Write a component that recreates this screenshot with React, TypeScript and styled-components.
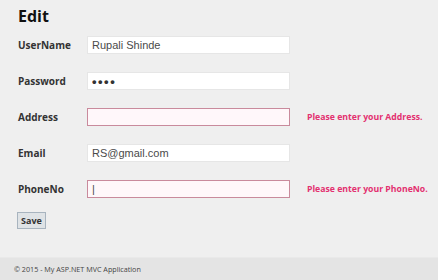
import React from "react";
import styled, { createGlobalStyle } from "styled-components";

const Global = createGlobalStyle`
  html, body { margin: 0; padding: 0; background: #efefef; }
  body { font-family: "Open Sans", "Liberation Sans", sans-serif; }
  #root { width: 438px; height: 280px; overflow: hidden; }
`;

const Page = styled.div`
  width: 438px;
  height: 280px;
  display: flex;
  flex-direction: column;
  background: #efefef;
`;

const Main = styled.main`
  flex: 1;
  padding: 6px 0 0 18px;
`;

const Title = styled.h2`
  margin: 0 0 10px 0;
  font-size: 16px;
  font-weight: 700;
  color: #111;
  line-height: 20px;
`;

const Form = styled.form`
  display: flex;
  flex-direction: column;
  gap: 18px;
`;

const Row = styled.div`
  display: grid;
  grid-template-columns: 69px 203px auto;
  column-gap: 0;
  align-items: center;
  height: 18px;
`;

const Label = styled.label`
  font-size: 10px;
  font-weight: 700;
  color: #333;
`;

const Input = styled.input<{ $error?: boolean; $secret?: boolean }>`
  box-sizing: border-box;
  width: 203px;
  height: 18px;
  padding: 0 0 0 4px;
  border: 1px solid ${(p) => (p.$error ? "#c98a9c" : "#e6e6e6")};
  background: ${(p) => (p.$error ? "#fff7fa" : "#ffffff")};
  font-family: "Liberation Sans", Arial, sans-serif;
  font-size: ${(p) => (p.$secret ? "13px" : "11px")};
  letter-spacing: ${(p) => (p.$secret ? "1.5px" : "0")};
  font-weight: ${(p) => (p.$secret ? 700 : 400)};
  color: ${(p) => (p.$secret ? "#333" : "#4a4a4a")};
  outline: none;
`;

const Error = styled.span`
  margin-left: 17px;
  font-size: 8.7px;
  font-weight: 700;
  color: #e3316f;
  white-space: nowrap;
`;

const SaveButton = styled.button`
  align-self: flex-start;
  margin: -4px 0 0 -1px;
  box-sizing: border-box;
  height: 17px;
  padding: 0 3px;
  border: 1px solid #a8b4bf;
  background: #dfe3e6;
  font-family: "Open Sans", sans-serif;
  font-size: 9px;
  font-weight: 700;
  color: #333;
`;

const Footer = styled.footer`
  height: 22px;
  background: #e4e4e4;
  border-top: 1px solid #e9e9e9;
  display: flex;
  align-items: center;
  padding-left: 14px;
  font-family: "Open Sans", sans-serif;
  font-size: 7.2px;
  color: #444;
`;

const fields = [
  { label: "UserName", value: "Rupali Shinde" },
  { label: "Password", value: "••••", secret: true },
  { label: "Address", value: "", error: "Please enter your Address." },
  { label: "Email", value: "RS@gmail.com" },
  { label: "PhoneNo", value: "|", error: "Please enter your PhoneNo." },
];

export default function App() {
  return (
    <Page>
      <Global />
      <Main>
        <Title>Edit</Title>
        <Form onSubmit={(e) => e.preventDefault()}>
          {fields.map((f) => (
            <Row key={f.label}>
              <Label>{f.label}</Label>
              <Input $error={!!f.error} $secret={!!f.secret} readOnly value={f.value} />
              {f.error ? <Error>{f.error}</Error> : <span />}
            </Row>
          ))}
          <SaveButton type="submit">Save</SaveButton>
        </Form>
      </Main>
      <Footer>© 2015 - My ASP.NET MVC Application</Footer>
    </Page>
  );
}
